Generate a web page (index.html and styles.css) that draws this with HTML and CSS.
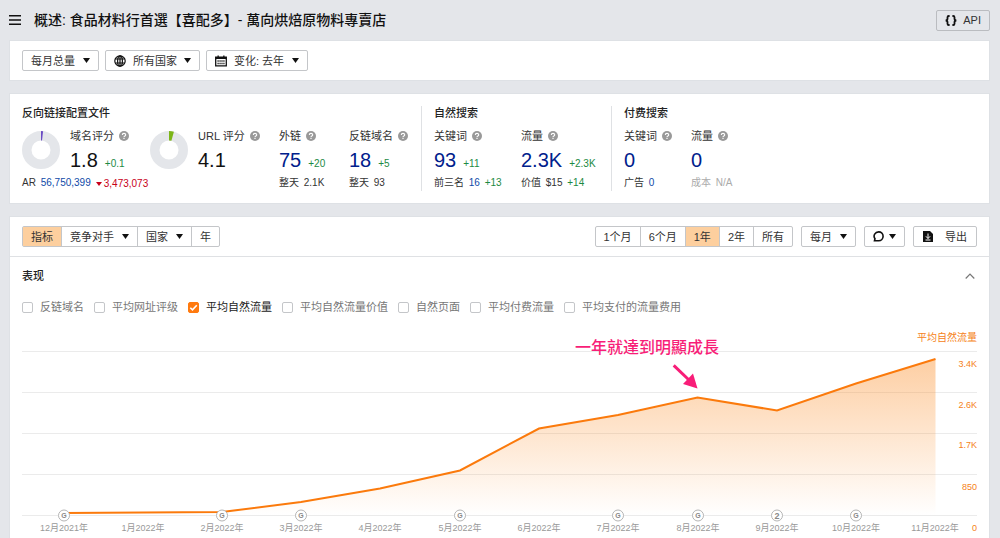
FILE: index.html
```html
<!DOCTYPE html>
<html lang="zh-CN">
<head>
<meta charset="utf-8">
<meta name="viewport" content="width=device-width, initial-scale=1">
<title>概述</title>
<link rel="stylesheet" href="styles.css">
</head>
<body>
<svg class="defs" width="0" height="0" aria-hidden="true">
  <symbol id="caret" viewBox="0 0 7 5"><path d="M0 0h7L3.5 5z"/></symbol>
  <symbol id="help" viewBox="0 0 10 10"><circle cx="5" cy="5" r="5" fill="#999"/><path d="M3.3 4C3.3 1.9 6.7 1.9 6.7 3.9 6.7 5 5 4.9 5 6" fill="none" stroke="#fff" stroke-width="1.1"/><path d="M4.4 6.8h1.2v1.2H4.4z" fill="#fff"/></symbol>
</svg>

<header class="topbar">
  <button class="menu" aria-label="菜单"><svg width="12" height="10" viewBox="0 0 12 10"><path d="M0 .75h12M0 5h12M0 9.25h12" stroke="#111" stroke-width="1.5"/></svg></button>
  <h1 class="title">概述: 食品材料行首選【喜配多】- 萬向烘焙原物料專賣店</h1>
  <button class="btn btn-api"><svg width="12" height="11" viewBox="0 0 12 11"><path d="M4.6 1H3.8Q2.5 1 2.5 2.3v1.5Q2.5 5.5.6 5.5 2.5 5.5 2.5 7.2v1.5Q2.5 10 3.8 10h.8M7.4 1h.8Q9.5 1 9.5 2.3v1.5Q9.5 5.5 11.4 5.5 9.5 5.5 9.5 7.2v1.5Q9.5 10 8.2 10h-.8" fill="none" stroke="#111" stroke-width="1.8"/></svg>API</button>
</header>

<main class="page">
  <section class="card filters">
    <span class="btn">
      <select aria-label="总量"><option>每月总量</option></select>
      <svg class="caret"><use href="#caret"/></svg>
    </span>
    <span class="btn btn-icon">
      <svg width="12" height="12" viewBox="0 0 12 12" fill="none" stroke="#111" stroke-width="1.2"><circle cx="6" cy="6" r="5.2"/><ellipse cx="6" cy="6" rx="2.4" ry="5.2"/><path d="M1.3 4h9.4M1.3 8h9.4M6 1v10"/></svg>
      <select aria-label="国家"><option>所有国家</option></select>
      <svg class="caret"><use href="#caret"/></svg>
    </span>
    <span class="btn btn-icon">
      <svg width="12" height="12" viewBox="0 0 12 12"><path d="M.7 2.2h10.6v8.6H.7z" fill="none" stroke="#111" stroke-width="1.3"/><path d="M.5 2h11v2H.5zM2.5.5h1.3V3H2.5zM8.2.5h1.3V3H8.2z" fill="#111"/><path d="M2.5 6h7M2.5 8.5h7" stroke="#111" stroke-width="1.3" stroke-dasharray="1.2 .75"/></svg>
      <select aria-label="变化"><option>变化: 去年</option></select>
      <svg class="caret"><use href="#caret"/></svg>
    </span>
  </section>

  <section class="card stats">
    <div class="group">
      <h2 class="heading">反向链接配置文件</h2>
      <div class="metrics metrics-links">
        <div class="gauge">
          <svg class="donut" viewBox="0 0 38 38"><circle cx="19" cy="19" r="14.25" fill="none" stroke="#e4e6ea" stroke-width="9.5"/><path d="M19 0L21.1.15 20 9.5H19z" fill="#6a4bc4"/></svg>
          <div class="metric">
            <div class="label">域名评分<svg class="help"><use href="#help"/></svg></div>
            <div class="value dark">1.8<span class="delta up">+0.1</span></div>
          </div>
          <div class="foot">AR <a href="#">56,750,399</a><span class="down"><svg class="fall" viewBox="0 0 6 4"><path d="M0 0h6L3 4z"/></svg>3,473,073</span></div>
        </div>
        <div class="gauge">
          <svg class="donut" viewBox="0 0 38 38"><circle cx="19" cy="19" r="14.25" fill="none" stroke="#e4e6ea" stroke-width="9.5"/><path d="M19 0Q21.5 0 23.9.7L21.4 9.8 19 9.5z" fill="#7cb518"/></svg>
          <div class="metric">
            <div class="label">URL 评分<svg class="help"><use href="#help"/></svg></div>
            <div class="value dark">4.1</div>
          </div>
        </div>
        <div class="metric">
          <div class="label">外链<svg class="help"><use href="#help"/></svg></div>
          <div class="value"><a href="#">75</a><span class="delta up">+20</span></div>
          <div class="foot">整天 <span>2.1K</span></div>
        </div>
        <div class="metric">
          <div class="label">反链域名<svg class="help"><use href="#help"/></svg></div>
          <div class="value"><a href="#">18</a><span class="delta up">+5</span></div>
          <div class="foot">整天 <span>93</span></div>
        </div>
      </div>
    </div>
    <div class="group">
      <h2 class="heading">自然搜索</h2>
      <div class="metrics metrics-organic">
        <div class="metric">
          <div class="label">关键词<svg class="help"><use href="#help"/></svg></div>
          <div class="value"><a href="#">93</a><span class="delta up">+11</span></div>
          <div class="foot">前三名 <a href="#">16</a> <span class="up">+13</span></div>
        </div>
        <div class="metric">
          <div class="label">流量<svg class="help"><use href="#help"/></svg></div>
          <div class="value"><a href="#">2.3K</a><span class="delta up">+2.3K</span></div>
          <div class="foot">价值 <span>$15</span> <span class="up">+14</span></div>
        </div>
      </div>
    </div>
    <div class="group">
      <h2 class="heading">付费搜索</h2>
      <div class="metrics metrics-paid">
        <div class="metric">
          <div class="label">关键词<svg class="help"><use href="#help"/></svg></div>
          <div class="value"><a href="#">0</a></div>
          <div class="foot">广告 <a href="#">0</a></div>
        </div>
        <div class="metric">
          <div class="label">流量<svg class="help"><use href="#help"/></svg></div>
          <div class="value"><a href="#">0</a></div>
          <div class="foot muted">成本 <span>N/A</span></div>
        </div>
      </div>
    </div>
  </section>

  <section class="card report">
    <div class="toolbar">
      <div class="segments">
        <button class="segment active">指标</button>
        <button class="segment">竞争对手<svg class="caret"><use href="#caret"/></svg></button>
        <button class="segment">国家<svg class="caret"><use href="#caret"/></svg></button>
        <button class="segment">年</button>
      </div>
      <div class="segments push">
        <button class="segment">1个月</button>
        <button class="segment">6个月</button>
        <button class="segment active">1年</button>
        <button class="segment">2年</button>
        <button class="segment">所有</button>
      </div>
      <span class="btn">
        <select aria-label="周期"><option>每月</option></select>
        <svg class="caret"><use href="#caret"/></svg>
      </span>
      <button class="btn btn-notes" aria-label="注释"><svg width="11" height="11" viewBox="0 0 11 11"><path d="M1.5 9.8L2 7.7C-.3 4.5 2.2.9 5.7.9c2.5 0 4.4 1.900 4.400 4.400S8.200 9.700 5.700 9.700z" fill="none" stroke="#111" stroke-width="1.6"/></svg><svg class="caret"><use href="#caret"/></svg></button>
      <button class="btn btn-export"><svg width="10" height="11" viewBox="0 0 10 11"><path d="M0 0h7l3 3v8H0z" fill="#111"/><path d="M5 2.5v5M2.9 5.3L5 7.5l2.100-2.200M2.500 9h5" fill="none" stroke="#fff" stroke-width="1"/></svg>导出</button>
    </div>

    <div class="performance">
      <div class="perf-head">
        <h2 class="heading">表现</h2>
        <button class="fold" aria-label="收起"><svg width="10" height="6" viewBox="0 0 10 6"><path d="M.7 5.500L5 1l4.300 4.500" fill="none" stroke="#777" stroke-width="1.2"/></svg></button>
      </div>
      <div class="checks">
        <label class="check"><input type="checkbox">反链域名</label>
        <label class="check"><input type="checkbox">平均网址评级</label>
        <label class="check"><input type="checkbox" checked>平均自然流量</label>
        <label class="check"><input type="checkbox">平均自然流量价值</label>
        <label class="check"><input type="checkbox">自然页面</label>
        <label class="check"><input type="checkbox">平均付费流量</label>
        <label class="check"><input type="checkbox">平均支付的流量费用</label>
      </div>

      <svg class="chart" viewBox="0 0 955 219" role="img" aria-label="平均自然流量">
        <defs>
          <linearGradient id="area" x1="0" y1="0" x2="0" y2="1">
            <stop offset="0" stop-color="#fb8b24" stop-opacity=".42"/>
            <stop offset="1" stop-color="#fb8b24" stop-opacity="0"/>
          </linearGradient>
        </defs>
        <path class="grid" d="M0 32.500H955M0 73.500H955M0 114.500H955M0 155.500H955M0 196.500H955"/>
        <path fill="url(#area)" d="M42 194L121 193.500 200 193 279 183 358 169.500 438 151.500 517 109.500 596 96 675.500 78.500 755 91.500 834 64.500 913.500 40V196.500H42z"/>
        <path class="line" d="M42 194L121 193.500 200 193 279 183 358 169.500 438 151.500 517 109.500 596 96 675.500 78.500 755 91.500 834 64.500 913.500 40"/>
        <g class="marks">
          <circle cx="42" cy="196.500" r="5.500"/><text x="42" y="199">G</text>
          <circle cx="200" cy="196.500" r="5.500"/><text x="200" y="199">G</text>
          <circle cx="279" cy="196.500" r="5.500"/><text x="279" y="199">G</text>
          <circle cx="438" cy="196.500" r="5.500"/><text x="438" y="199">G</text>
          <circle cx="596" cy="196.500" r="5.500"/><text x="596" y="199">G</text>
          <circle cx="676" cy="196.500" r="5.500"/><text x="676" y="199">G</text>
          <circle cx="755" cy="196.500" r="5.500"/><text class="count" x="755" y="200">2</text>
          <circle cx="834" cy="196.500" r="5.500"/><text x="834" y="199">G</text>
        </g>
        <g class="months">
          <text x="42" y="212">12月2021年</text>
          <text x="121" y="212">1月2022年</text>
          <text x="200" y="212">2月2022年</text>
          <text x="279" y="212">3月2022年</text>
          <text x="358" y="212">4月2022年</text>
          <text x="438" y="212">5月2022年</text>
          <text x="517" y="212">6月2022年</text>
          <text x="596" y="212">7月2022年</text>
          <text x="676" y="212">8月2022年</text>
          <text x="755" y="212">9月2022年</text>
          <text x="834" y="212">10月2022年</text>
          <text x="913" y="212">11月2022年</text>
        </g>
        <g class="scale">
          <text class="scale-title" x="955" y="22">平均自然流量</text>
          <text x="955" y="48">3.4K</text>
          <text x="955" y="89">2.6K</text>
          <text x="955" y="129">1.7K</text>
          <text x="955" y="171">850</text>
          <text x="955" y="212">0</text>
        </g>
        <text class="note" x="553" y="34">一年就達到明顯成長</text>
        <path d="M651.700 46.300L667 61" stroke="#f81d78" stroke-width="3"/>
        <path d="M675.500 69.500L661 65 671 54.500z" fill="#f81d78"/>
      </svg>
    </div>
  </section>
</main>
</body>
</html>
```

FILE: styles.css
```css
* {
  box-sizing: border-box;
}

body {
  margin: 0;
  background: #e4e6ea;
  color: #333;
  font: 11px/14px "Liberation Sans", "Noto Sans CJK SC", sans-serif;
}

button,
select {
  font: inherit;
  color: inherit;
}

a {
  color: #0f4aa8;
  text-decoration: none;
}

.defs {
  position: absolute;
}

.topbar {
  display: flex;
  align-items: center;
  gap: 13px;
  height: 40px;
  padding: 0 10px 0 9px;
}

.menu,
.fold {
  display: flex;
  padding: 0;
  border: 0;
  background: none;
}

.title {
  flex: 1;
  margin: 0;
  color: #111;
  font-size: 14px;
  font-weight: 500;
  line-height: 20px;
}

.btn {
  display: inline-flex;
  align-items: center;
  gap: 8px;
  height: 21px;
  padding: 0 8px;
  border: 1px solid #c4c6c9;
  border-radius: 2px;
  background: #fff;
  white-space: nowrap;
}

.btn select {
  padding: 0;
  border: 0;
  background: none;
  appearance: none;
}

.btn-icon {
  gap: 7px;
}

.btn-api {
  gap: 6px;
  background: none;
  border-color: #babcc0;
}

.btn-notes {
  gap: 5px;
}

.btn-export {
  gap: 12px;
  padding: 0 9px;
}

.caret {
  width: 7px;
  height: 5px;
  fill: #111;
}

.page {
  display: flex;
  flex-direction: column;
  gap: 12px;
  padding: 0 10px 0 9px;
}

.card {
  border: 1px solid #dee1e5;
  background: #fff;
}

.filters {
  display: flex;
  gap: 6px;
  padding: 9px 12px;
}

.heading {
  margin: 0;
  color: #222;
  font-size: 11px;
  font-weight: 500;
  line-height: 14px;
}

.stats {
  display: flex;
  padding: 12px;
}

.group + .group {
  padding-left: 12px;
  border-left: 1px solid #dfe1e4;
}

.metrics {
  display: grid;
  margin-top: 8px;
}

.metrics-links {
  grid-template-columns: 128px 129px 70px 72px;
}

.metrics-organic {
  grid-template-columns: 87px 90px;
}

.metrics-paid {
  grid-template-columns: 67px 90px;
}

.gauge {
  display: grid;
  grid-template-columns: 38px auto;
  column-gap: 10px;
  align-content: start;
}

.donut {
  width: 38px;
  height: 38px;
  margin-top: 3px;
}

.gauge .foot {
  grid-column: 1 / -1;
}

.label {
  display: flex;
  align-items: center;
  gap: 5px;
  line-height: 16px;
  white-space: nowrap;
}

.help {
  width: 10px;
  height: 10px;
}

.value {
  display: flex;
  align-items: baseline;
  gap: 7px;
  margin-top: 4px;
  font-size: 20px;
  line-height: 24px;
}

.value a {
  color: #00208c;
}

.dark {
  color: #111;
}

.delta {
  font-size: 10px;
  line-height: 12px;
}

.up {
  color: #1c8a43;
}

.foot {
  margin-top: 4px;
  font-size: 10px;
  line-height: 14px;
  white-space: nowrap;
}

.foot a,
.foot span {
  margin-left: 2px;
}

.foot .down {
  display: inline-flex;
  align-items: center;
  gap: 2px;
  margin-left: 5px;
  color: #c8001a;
}

.fall {
  width: 6px;
  height: 4px;
  fill: currentColor;
}

.muted {
  color: #aaa;
}

.toolbar {
  display: flex;
  gap: 8px;
  padding: 9px 12px;
  border-bottom: 1px solid #dfe1e4;
}

.push {
  margin-left: auto;
}

.segments {
  display: flex;
  height: 21px;
  border: 1px solid #c4c6c9;
  border-radius: 2px;
}

.segment {
  display: flex;
  align-items: center;
  gap: 8px;
  padding: 0 8px;
  border: 0;
  background: none;
  white-space: nowrap;
}

.segment + .segment {
  border-left: 1px solid #c4c6c9;
}

.segments .active {
  background: #fdcf9e;
}

.performance {
  padding: 12px 12px 0;
}

.perf-head {
  display: flex;
  align-items: center;
  justify-content: space-between;
  padding-right: 2px;
}

.checks {
  display: flex;
  flex-wrap: wrap;
  gap: 10px;
  margin-top: 16px;
}

.check {
  display: flex;
  align-items: center;
  gap: 7px;
  color: #777;
  line-height: 16px;
}

.check:has(:checked) {
  color: #222;
}

.check input {
  width: 11px;
  height: 11px;
  margin: 0;
  border: 1px solid #c4c6c9;
  border-radius: 2px;
  background: #fff;
  appearance: none;
}

.check input:checked {
  border-color: #ff7a0f;
  background: #ff7a0f url("data:image/svg+xml,%3Csvg xmlns='http://www.w3.org/2000/svg' viewBox='0 0 9 9'%3E%3Cpath d='M1.3 4.7L3.5 6.9 7.8 2.3' fill='none' stroke='white' stroke-width='1.6'/%3E%3C/svg%3E") center / 9px 9px no-repeat;
}

.chart {
  display: block;
  width: 100%;
  height: auto;
  margin-top: 4px;
}

.grid {
  stroke: #ebebeb;
}

.line {
  fill: none;
  stroke: #fb7a0c;
  stroke-width: 2px;
}

.marks circle {
  fill: #fff;
  stroke: #b5b5b5;
}

.marks text {
  fill: #888;
  font-size: 7px;
  font-weight: bold;
  text-anchor: middle;
}

.marks .count {
  font-size: 9px;
}

.months text {
  fill: #999;
  font-size: 9px;
  text-anchor: middle;
}

.scale text {
  fill: #f58220;
  font-size: 9px;
  text-anchor: end;
}

.scale .scale-title {
  font-size: 10px;
}

.note {
  fill: #f81d78;
  font-size: 16px;
  font-weight: 500;
}
```
